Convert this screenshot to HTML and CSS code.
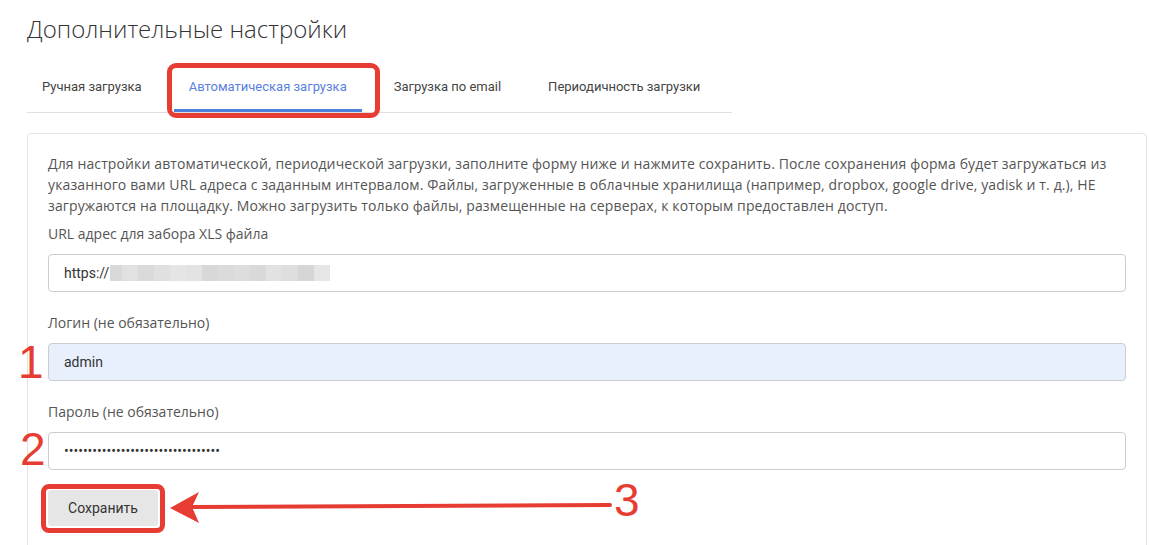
FILE: index.html
```html
<!DOCTYPE html>
<html lang="ru">
<head>
<meta charset="utf-8">
<title>Дополнительные настройки</title>
<link rel="stylesheet" href="styles.css">
</head>
<body>
<div class="page">
  <h1 class="title">Дополнительные настройки</h1>
  <nav class="tabs">
    <a class="tab">Ручная загрузка</a>
    <a class="tab active">Автоматическая загрузка</a>
    <a class="tab">Загрузка по email</a>
    <a class="tab">Периодичность загрузки</a>
  </nav>
  <section class="card">
    <p class="intro">Для настройки автоматической, периодической загрузки, заполните форму ниже и нажмите сохранить. После сохранения форма будет загружаться из указанного вами URL адреса с заданным интервалом. Файлы, загруженные в облачные хранилища (например, dropbox, google drive, yadisk и т. д.), НЕ загружаются на площадку. Можно загрузить только файлы, размещенные на серверах, к которым предоставлен доступ.</p>
    <div class="group">
      <label class="label">URL адрес для забора XLS файла</label>
      <div class="field">https://<span class="blur"><i class="b1"></i><i class="b2"></i><i class="b3"></i><i class="b4"></i><i class="b5"></i><i class="b6"></i><i class="b7"></i><i class="b8"></i><i class="b9"></i><i class="b10"></i><i class="b11"></i><i class="b12"></i><i class="b13"></i><i class="b14"></i></span></div>
    </div>
    <div class="group">
      <label class="label">Логин (не обязательно)</label>
      <div class="field autofill">admin</div>
    </div>
    <div class="group">
      <label class="label">Пароль (не обязательно)</label>
      <div class="field"><span class="dots">•••••••••••••••••••••••••••••••••</span></div>
    </div>
    <button class="btn">Сохранить</button>
  </section>

  <div class="mark mark-tab"></div>
  <div class="mark mark-btn"></div>
  <div class="num n1">1</div>
  <div class="num n2">2</div>
  <div class="num n3">3</div>
  <svg class="arrow" width="460" height="40" viewBox="165 488 460 40">
    <line x1="192" y1="507" x2="610" y2="505" stroke="#e63c32" stroke-width="4" stroke-linecap="round"/>
    <polygon points="170,508 199,492 192,507 199,523" fill="#e63c32"/>
  </svg>
</div>
</body>
</html>
```

FILE: styles.css
```css
html, body {
  margin: 0;
  padding: 0;
  background: #fff;
  overflow: hidden;
}
body {
  font-family: "Open Sans", "DejaVu Sans", sans-serif;
  color: #555;
}
.page {
  position: relative;
  padding: 12px 19px 0 27px;
  height: 545px;
  box-sizing: border-box;
}
.title {
  margin: 0 0 18px 0;
  font-family: "Open Sans", sans-serif;
  font-weight: 300;
  font-size: 24px;
  line-height: 33px;
  color: #333;
}
.tabs {
  display: flex;
  width: 705px;
  border-bottom: 1px solid #e0e0e0;
}
.tab {
  display: block;
  padding: 0 15px;
  margin-right: 17px;
  height: 46px;
  line-height: 47px;
  border-bottom: 3px solid transparent;
  font-family: Roboto, "Liberation Sans", sans-serif;
  font-size: 13px;
  color: #444;
  white-space: nowrap;
}
.tab.active {
  color: #5a7fe0;
  border-bottom-color: #4d80d8;
}
.card {
  margin-top: 20px;
  width: 1120px;
  box-sizing: border-box;
  border: 1px solid #e2e2e2;
  border-radius: 4px;
  padding: 19px 20px 40px 20px;
}
.intro {
  margin: 0 0 7px 0;
  font-size: 14px;
  letter-spacing: 0.12px;
  line-height: 21px;
  color: #555;
}
.group {
  margin-bottom: 20px;
}
.label {
  display: block;
  font-size: 14px;
  line-height: 21px;
  color: #555;
  margin-bottom: 10px;
}
.field {
  box-sizing: border-box;
  height: 38px;
  border: 1px solid #cccccc;
  border-radius: 4px;
  padding: 0 15px;
  display: flex;
  align-items: center;
  font-family: Roboto, "Liberation Sans", sans-serif;
  font-size: 14px;
  color: #333;
}
.field.autofill {
  background: #e8f0fe;
}
.blur {
  display: inline-flex;
  height: 16px;
  margin-left: 1px;
}
.blur i {
  display: block;
  width: 16px;
  height: 16px;
  background: #dcdcdc;
}
.blur .b1 { width: 12px; background: #d9d9d9; }
.blur .b2 { background: #e1e1e1; }
.blur .b3 { background: #dadada; }
.blur .b4 { background: #e0e0e0; }
.blur .b5 { background: #e5e5e5; }
.blur .b6 { background: #e3e3e3; }
.blur .b7 { background: #d8d8d8; }
.blur .b8 { background: #dbdbdb; }
.blur .b9 { background: #dddddd; }
.blur .b10 { background: #d9d9d9; }
.blur .b11 { background: #e2e2e2; }
.blur .b12 { background: #dedede; }
.blur .b13 { background: #d6d6d6; }
.blur .b14 { width: 16px; background: #e6e6e6; }
.dots {
  font-family: Roboto, "Liberation Sans", sans-serif;
  font-size: 14px;
  letter-spacing: 0;
  color: #333;
}
.btn {
  display: block;
  width: 110px;
  height: 36px;
  border: none;
  border-radius: 3px;
  background: #e6e6e6;
  font-family: Roboto, "Liberation Sans", sans-serif;
  font-size: 14px;
  color: #333;
  padding: 0;
}
.mark {
  position: absolute;
  box-sizing: border-box;
  border: 5px solid #e63c32;
  border-radius: 9px;
}
.mark-tab {
  left: 167px;
  top: 63px;
  width: 213px;
  height: 55px;
}
.mark-btn {
  left: 41px;
  top: 484px;
  width: 124px;
  height: 49px;
  border-radius: 8px;
}
.num {
  position: absolute;
  font-family: "Liberation Sans", Arial, sans-serif;
  font-size: 46px;
  line-height: 46px;
  color: #e63c32;
}
.n1 { left: 18px; top: 339px; }
.n2 { left: 20px; top: 426px; }
.n3 { left: 614px; top: 477px; }
.arrow {
  position: absolute;
  left: 165px;
  top: 488px;
}
```
